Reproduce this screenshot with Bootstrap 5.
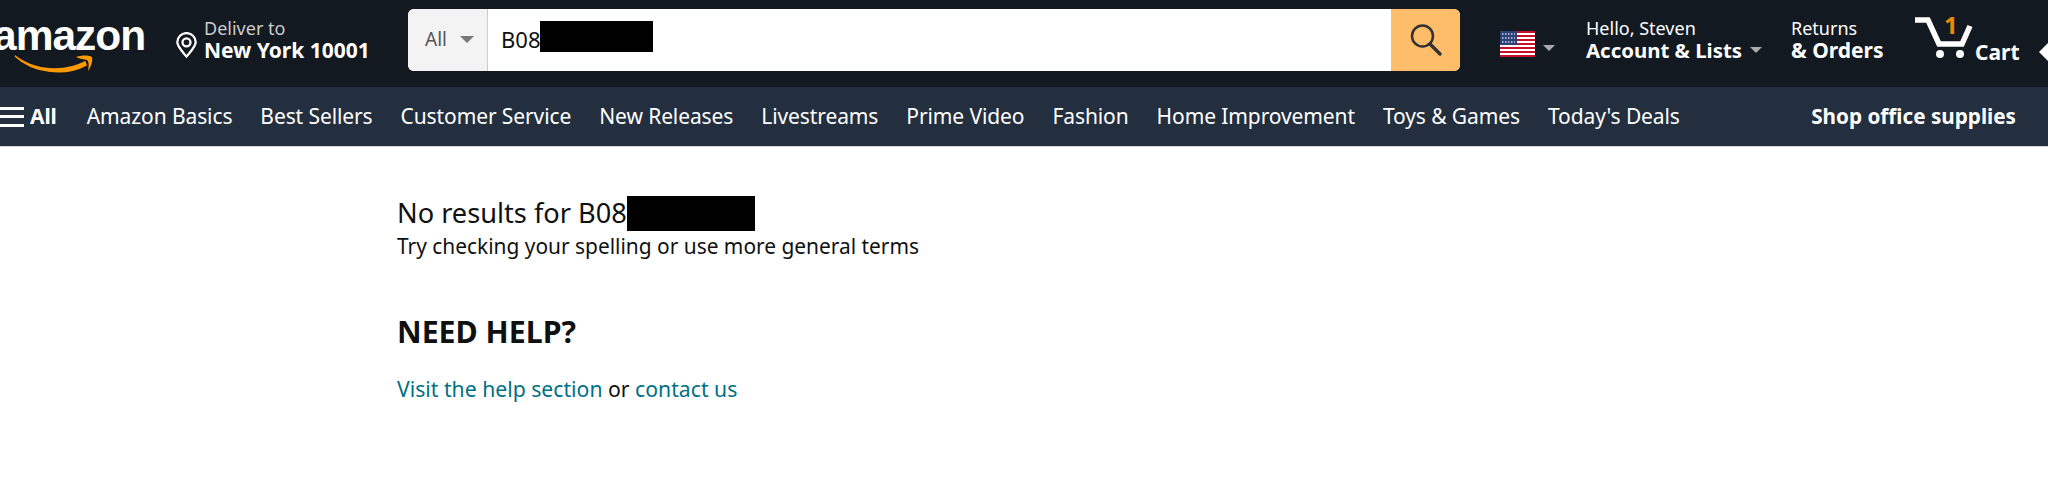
<!DOCTYPE html>
<html lang="en">
  <head>
    <meta charset="UTF-8" />
    <title>Amazon.com : B08</title>
    <meta name="viewport" content="width=device-width, initial-scale=1" />
    <link href="https://cdn.jsdelivr.net/npm/bootstrap@5.3.0/dist/css/bootstrap.min.css" rel="stylesheet" />
    <style>
      body { font-family: "Noto Sans", "Open Sans", sans-serif; background: #fff; color: #0f1111; overflow: hidden; }
      .top-bar { height: 87px; padding-bottom: 8px; background: #131921; color: #fff; overflow: hidden; }
      .sub-bar { height: 60px; background: #232f3e; color: #fff; border-bottom: 1px solid #d5dbdb; padding-right: 32px; overflow: hidden; }
      .logo-box { width: 183px; flex: none; margin-left: -7px; }
      .logo-word { font-family: "Liberation Sans", sans-serif; font-weight: 700; font-size: 42.5px; line-height: 36px; letter-spacing: -1px; color: #fff; margin-top: 12px; }
      .logo-smile { display: block; margin: 0 0 0 21px; }
      .deliver-box { width: 232px; flex: none; }
      .pin-icon { margin-right: 7px; }
      .line-small { font-size: 18px; line-height: 20px; white-space: nowrap; }
      .line-big { font-size: 21px; line-height: 24px; font-weight: 700; white-space: nowrap; }
      .line-account { font-size: 20.4px; }
      .muted-line { color: #ccc; }
      .search-box { width: 1052px; height: 62px; flex: none; border-radius: 6px; overflow: hidden; background: #fff; }
      .search-cat { width: 80px; padding-left: 17px; gap: 13px; background: #f3f3f3; color: #555; border-right: 1px solid #cdcdcd; font-size: 19px; }
      .search-cat .tri-down { border-top-color: #777; border-left-width: 7px; border-right-width: 7px; border-top-width: 7px; }
      .search-field { padding-left: 13px; font-size: 22px; color: #0f1111; }
      .search-btn { width: 69px; background: #febd69; }
      .redact { display: inline-block; background: #000; vertical-align: middle; }
      .redact-search { width: 113px; height: 31px; margin-top: -7px; }
      .redact-main { width: 128px; height: 35px; margin-top: -4px; }
      .tri-down { width: 0; height: 0; border-left: 6px solid transparent; border-right: 6px solid transparent; border-top: 6px solid #aaa; flex: none; }
      .flag-box { margin-left: 40px; width: 86px; flex: none; }
      .account-box { width: 205px; flex: none; }
      .returns-box { width: 124px; flex: none; }
      .cart-box { width: 124px; flex: none; position: relative; }
      .cart-count { position: absolute; left: 29px; top: -5px; color: #f08804; font-weight: 700; font-size: 24px; line-height: 28px; }
      .cart-word { font-size: 21px; font-weight: 700; line-height: 24px; margin: 24px 0 0 -11px; }
      .side-tip { width: 0; height: 0; border-top: 9px solid transparent; border-bottom: 9px solid transparent; border-right: 9px solid #fff; margin-top: 25px; flex: none; }
      .nav-list { gap: 28px; font-size: 21px; letter-spacing: -0.1px; }
      .burger { width: 24px; height: 20px; border-top: 3px solid #fff; border-bottom: 3px solid #fff; position: relative; flex: none; }
      .burger::after { content: ""; display: block; height: 3px; margin-top: 5px; background: #fff; }
      .all-word { font-weight: 700; margin-left: 6px; margin-right: 2px; }
      .shop-word { font-weight: 700; font-size: 20.7px; }
      .result-wrap { padding: 48px 0 0 397px; }
      .result-title { font-size: 27.2px; line-height: 36px; font-weight: 400; color: #0f1111; margin: 0; }
      .result-hint { font-size: 20.9px; line-height: 30px; color: #0f1111; margin: 0; }
      .help-title { font-size: 30.3px; line-height: 36px; font-weight: 700; color: #0f1111; margin: 53px 0 0; }
      .help-line { font-size: 21.2px; line-height: 28px; margin: 25px 0 0; }
      .help-line a { color: #007185; text-decoration: none; }
    </style>
  </head>
  <body>
    <header>
      <div class="top-bar d-flex align-items-center">
        <div class="logo-box">
          <div class="logo-word">amazon</div>
          <svg class="logo-smile" width="82" height="20" viewBox="0 0 82 20">
            <path d="M1 2C20 17 50 19 71 8L72 11C52 22 20 20 1 2Z" fill="#ff9900" stroke="#ff9900" stroke-width="1.5" />
            <path d="M62 3C68 1 75 1 78 3C79 7 77 13 74 17C75 12 75 8 73 6C70 5 66 5 62 3Z" fill="#ff9900" />
          </svg>
        </div>
        <div class="deliver-box d-flex align-items-end">
          <svg width="21" height="26" viewBox="0 0 21 26" class="pin-icon mb-1 flex-none">
            <path d="M10.500 24.500C5 18 1.300 14.500 1.300 10.300A9.200 9.200 0 0 1 19.700 10.300C19.700 14.500 16 18 10.500 24.500Z" fill="none" stroke="#fff" stroke-width="2.300" />
            <circle cx="10.500" cy="10.300" r="4" fill="none" stroke="#fff" stroke-width="2.300" />
          </svg>
          <div>
            <div class="line-small muted-line">Deliver to</div>
            <div class="line-big">New York 10001</div>
          </div>
        </div>
        <div class="search-box d-flex">
          <div class="search-cat d-flex align-items-center">
            <span>All</span><span class="tri-down"></span>
          </div>
          <div class="search-field flex-grow-1 d-flex align-items-center">
            <span>B08</span><span class="redact redact-search"></span>
          </div>
          <div class="search-btn d-flex align-items-center justify-content-center">
            <svg width="36" height="36" viewBox="0 0 36 36">
              <circle cx="14.500" cy="14" r="10.500" fill="none" stroke="#333" stroke-width="2.500" />
              <path d="M22 22L32 32" stroke="#333" stroke-width="3.500" stroke-linecap="round" />
            </svg>
          </div>
        </div>
        <div class="flag-box d-flex align-items-center gap-2">
          <svg width="35" height="26" viewBox="0 0 35 26" class="mt-2">
            <rect width="35" height="26" rx="2" fill="#fff" />
            <path d="M0 1H35M0 5H35M0 9H35M0 13H35M0 17H35M0 21H35M0 25H35" stroke="#c8102e" stroke-width="2" />
            <rect width="17" height="14" rx="1" fill="#2b3f78" />
            <path d="M2 3H15M2 7H15M2 11H15" stroke="#cfd6e6" stroke-width="1.500" stroke-dasharray="1.500 1.500" />
          </svg>
          <span class="tri-down mt-3"></span>
        </div>
        <div class="account-box">
          <div class="line-small">Hello, Steven</div>
          <div class="line-big line-account d-flex align-items-center gap-2">Account &amp; Lists <span class="tri-down"></span></div>
        </div>
        <div class="returns-box">
          <div class="line-small">Returns</div>
          <div class="line-big">&amp; Orders</div>
        </div>
        <div class="cart-box d-flex">
          <svg width="71" height="44" viewBox="0 0 71 44" class="flex-none">
            <path d="M-1 4H13L24 28H47L55 10" fill="none" stroke="#fff" stroke-width="5.500" />
            <circle cx="25" cy="38" r="4" fill="#fff" />
            <circle cx="45" cy="38" r="4" fill="#fff" />
          </svg>
          <span class="cart-count">1</span>
          <span class="cart-word">Cart</span>
        </div>
        <span class="side-tip"></span>
      </div>
      <nav class="sub-bar d-flex align-items-center justify-content-between">
        <div class="nav-list d-flex align-items-center text-nowrap">
          <div class="d-flex align-items-center">
            <span class="burger"></span><span class="all-word">All</span>
          </div>
          <span>Amazon Basics</span>
          <span>Best Sellers</span>
          <span>Customer Service</span>
          <span>New Releases</span>
          <span>Livestreams</span>
          <span>Prime Video</span>
          <span>Fashion</span>
          <span>Home Improvement</span>
          <span>Toys &amp; Games</span>
          <span>Today's Deals</span>
        </div>
        <span class="shop-word text-nowrap">Shop office supplies</span>
      </nav>
    </header>
    <main class="result-wrap">
      <h1 class="result-title">No results for B08<span class="redact redact-main"></span></h1>
      <p class="result-hint">Try checking your spelling or use more general terms</p>
      <h2 class="help-title">NEED HELP?</h2>
      <p class="help-line"><a href="#">Visit the help section</a> or <a href="#">contact us</a></p>
    </main>
    <script src="https://cdn.jsdelivr.net/npm/bootstrap@5.3.0/dist/js/bootstrap.bundle.min.js"></script>
  </body>
</html>
